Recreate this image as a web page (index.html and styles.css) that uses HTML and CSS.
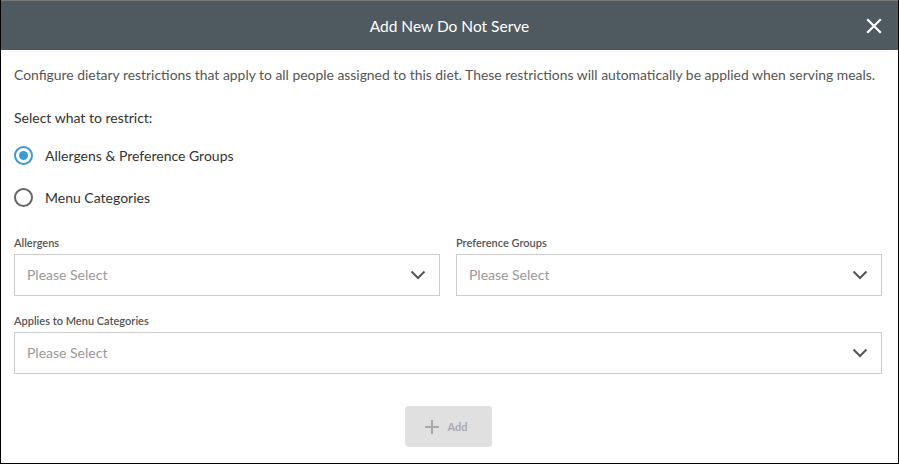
FILE: index.html
```html
<!DOCTYPE html>
<html>
<head>
<meta charset="utf-8">
<link rel="stylesheet" href="styles.css">
</head>
<body>
<div class="modal">
  <div class="header">
    <div class="title">Add New Do Not Serve</div>
    <button class="close" aria-label="Close">
      <svg width="16" height="16" viewBox="0 0 16 16"><path d="M2 2 L14 14 M14 2 L2 14" stroke="#fff" stroke-width="2.2" stroke-linecap="square"/></svg>
    </button>
  </div>
  <div class="content">
    <p class="desc">Configure dietary restrictions that apply to all people assigned to this diet. These restrictions will automatically be applied when serving meals.</p>
    <p class="prompt">Select what to restrict:</p>
    <div class="radios">
      <label class="radio"><span class="dot checked"></span><span>Allergens &amp; Preference Groups</span></label>
      <label class="radio"><span class="dot"></span><span>Menu Categories</span></label>
    </div>
    <div class="row">
      <div class="field">
        <div class="flabel">Allergens</div>
        <div class="select"><span>Please Select</span><svg class="chev" width="16" height="10" viewBox="0 0 16 10"><path d="M1.5 1.5 L8 8 L14.5 1.5" fill="none" stroke="#555" stroke-width="2"/></svg></div>
      </div>
      <div class="field">
        <div class="flabel">Preference Groups</div>
        <div class="select"><span>Please Select</span><svg class="chev" width="16" height="10" viewBox="0 0 16 10"><path d="M1.5 1.5 L8 8 L14.5 1.5" fill="none" stroke="#555" stroke-width="2"/></svg></div>
      </div>
    </div>
    <div class="field wide">
      <div class="flabel">Applies to Menu Categories</div>
      <div class="select"><span>Please Select</span><svg class="chev" width="16" height="10" viewBox="0 0 16 10"><path d="M1.5 1.5 L8 8 L14.5 1.5" fill="none" stroke="#555" stroke-width="2"/></svg></div>
    </div>
    <div class="actions">
      <button class="add" disabled>
        <svg width="14" height="14" viewBox="0 0 14 14"><path d="M7 0 V14 M0 7 H14" stroke="#aaa" stroke-width="2"/></svg>
        <span>Add</span>
      </button>
    </div>
  </div>
</div>
</body>
</html>
```

FILE: styles.css
```css
html, body {
  margin: 0;
  padding: 0;
  background: #fff;
}
body {
  font-family: Lato, "Open Sans", sans-serif;
}
.modal {
  width: 899px;
  height: 464px;
  box-sizing: border-box;
  border-left: 1px solid #000;
  border-right: 1px solid #000;
  border-bottom: 1px solid #000;
  background: #fff;
  display: flex;
  flex-direction: column;
}
.header {
  height: 50px;
  box-sizing: border-box;
  border-top: 1px solid #7a7a7a;
  background: #4e5a60;
  display: flex;
  align-items: center;
  justify-content: center;
  position: relative;
}
.title {
  color: #fff;
  font-size: 15.5px;
  line-height: 18px;
  padding-top: 1px;
}
.close {
  position: absolute;
  right: 16px;
  top: 17px;
  background: none;
  border: 0;
  padding: 0;
  width: 16px;
  height: 16px;
  display: flex;
}
.content {
  padding: 16px 16px 0 13px;
}
.desc {
  margin: 0;
  font-size: 13.9px;
  line-height: 18px;
  color: #555;
}
.prompt {
  margin: 25px 0 0;
  font-size: 14px;
  line-height: 18px;
  color: #333;
}
.radios {
  margin-top: 7px;
  display: flex;
  flex-direction: column;
}
.radio {
  height: 42px;
  display: flex;
  align-items: center;
  gap: 12px;
  font-size: 14px;
  color: #333;
}
.dot {
  width: 19px;
  height: 19px;
  box-sizing: border-box;
  border-radius: 50%;
  border: 2px solid #666;
  position: relative;
  flex: none;
}
.dot.checked {
  border-color: #3a9ad9;
}
.dot.checked::after {
  content: "";
  position: absolute;
  left: 3px;
  top: 3px;
  width: 9px;
  height: 9px;
  border-radius: 50%;
  background: #3a9ad9;
}
.row {
  margin-top: 18px;
  display: flex;
  gap: 16px;
}
.field {
  flex: 1;
}
.field.wide {
  margin-top: 18px;
}
.flabel {
  font-size: 11px;
  line-height: 14px;
  color: #555;
  font-weight: 600;
  margin-bottom: 4px;
}
.select {
  height: 42px;
  box-sizing: border-box;
  border: 1px solid #ccc;
  display: flex;
  align-items: center;
  justify-content: space-between;
  padding: 0 13px 1px 12px;
  font-size: 14px;
  color: #999;
}
.chev {
  display: block;
}
.actions {
  display: flex;
  justify-content: center;
  margin-top: 32px;
}
.add {
  width: 87px;
  height: 41px;
  border: 0;
  border-radius: 4px;
  background: #e0e0e0;
  display: flex;
  align-items: center;
  justify-content: center;
  gap: 8px;
  padding: 0 3px 0 0;
  font-family: Lato, "Open Sans", sans-serif;
  font-size: 11px;
  font-weight: 700;
  color: #aaa;
}
```
